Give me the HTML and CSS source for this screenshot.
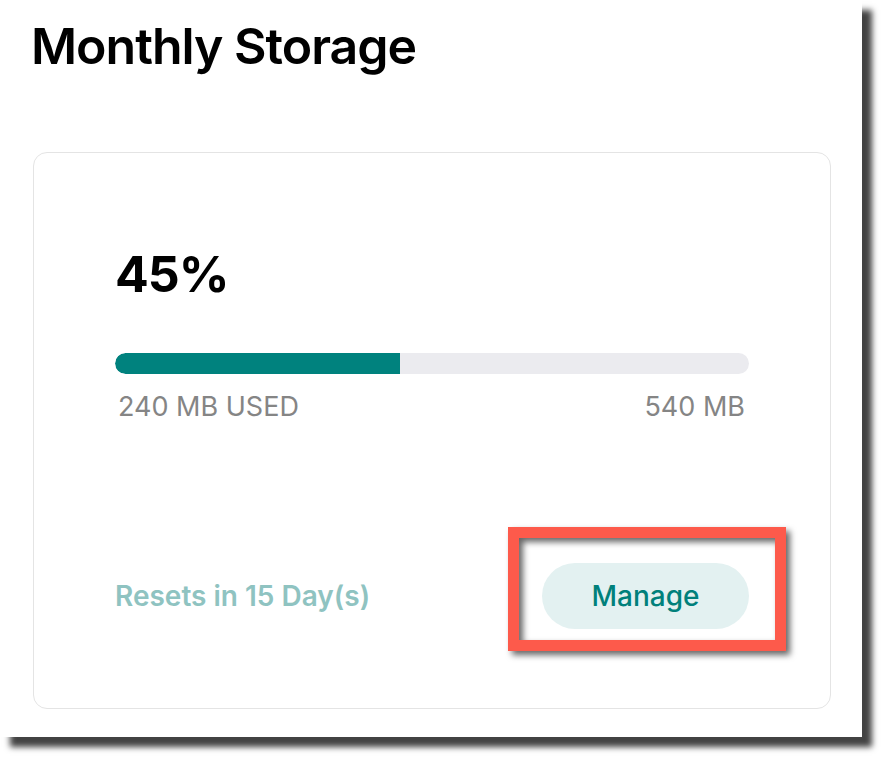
FILE: index.html
```html
<!DOCTYPE html>
<html lang="en">
<head>
<meta charset="utf-8">
<title>Monthly Storage</title>
<link rel="stylesheet" href="styles.css">
</head>
<body>
<div class="panel">
  <h1 class="title">Monthly Storage</h1>
  <section class="card">
    <div class="percent">45%</div>
    <div class="track"><div class="fill" style="width:45%"></div></div>
    <div class="labels">
      <span>240 MB USED</span>
      <span>540 MB</span>
    </div>
    <div class="footer">
      <span class="resets">Resets in 15 Day(s)</span>
      <div class="btn-wrap">
        <button class="manage" type="button">Manage</button>
        <div class="highlight"></div>
      </div>
    </div>
  </section>
</div>
</body>
</html>
```
FILE: styles.css
```css
html, body {
  margin: 0;
  padding: 0;
  background: #ffffff;
}
body {
  font-family: Inter, "Noto Sans", sans-serif;
  width: 882px;
  height: 758px;
  overflow: hidden;
}
.panel {
  box-sizing: border-box;
  width: 862px;
  height: 737px;
  background: #ffffff;
  box-shadow: 10px 10px 6px rgba(0, 0, 0, 0.74);
  padding: 16px 31px 0 33px;
}
.title {
  margin: 0 0 0 -2px;
  font-size: 50px;
  line-height: 60px;
  font-weight: 600;
  color: #000;
  letter-spacing: -1px;
}
.card {
  box-sizing: border-box;
  margin-top: 76px;
  width: 798px;
  height: 557px;
  border: 1.5px solid #e4e4e4;
  border-radius: 14px;
  padding: 91px 81px 79px 81px;
  display: flex;
  flex-direction: column;
}
.percent {
  font-size: 50px;
  line-height: 60px;
  font-weight: 700;
  letter-spacing: -1px;
  color: #000;
}
.track {
  margin-top: 49px;
  height: 21px;
  border-radius: 11px;
  background: #ebebef;
  overflow: hidden;
}
.fill {
  height: 100%;
  background: #00827e;
  border-radius: 11px 0 0 11px;
}
.labels {
  margin-top: 17px;
  display: flex;
  justify-content: space-between;
  padding: 0 4px 0 3px;
  font-size: 27px;
  line-height: 32px;
  color: #858585;
}
.footer {
  margin-top: auto;
  display: flex;
  align-items: center;
  justify-content: space-between;
}
.resets {
  font-size: 28px;
  font-weight: 600;
  color: #8fc3c1;
}
.btn-wrap {
  position: relative;
}
.manage {
  display: block;
  width: 207px;
  height: 66px;
  border: none;
  border-radius: 33px;
  background: #e3f1f1;
  color: #00807b;
  font-family: Inter, "Noto Sans", sans-serif;
  font-size: 28px;
  font-weight: 500;
  padding: 0;
}
.highlight {
  position: absolute;
  left: -34px;
  top: -36px;
  width: 278px;
  height: 124px;
  box-sizing: border-box;
  border: 11px solid #fd5a4b;
  filter: drop-shadow(4px 4px 3px rgba(0, 0, 0, 0.6));
  pointer-events: none;
}
```
